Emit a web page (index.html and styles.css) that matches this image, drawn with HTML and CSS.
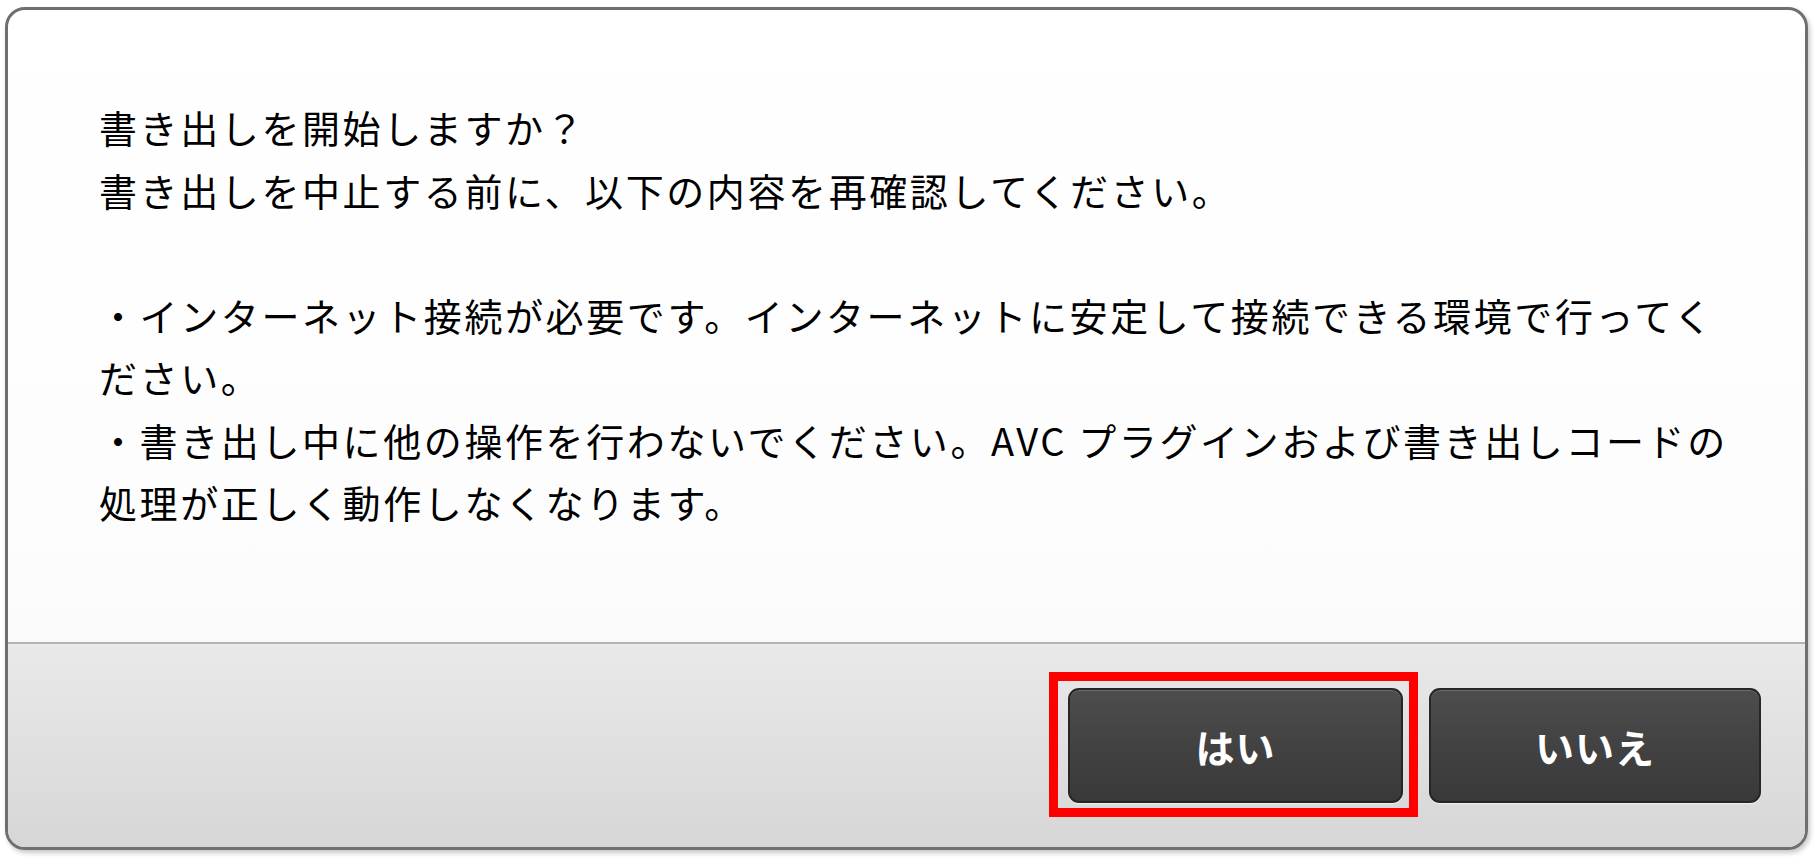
FILE: index.html
```html
<!DOCTYPE html>
<html lang="ja">
<head>
<meta charset="utf-8">
<title>書き出し確認</title>
<link rel="stylesheet" href="styles.css">
</head>
<body>
<div class="dialog">
  <div class="content">
    <p class="msg">書き出しを開始しますか？<br>書き出しを中止する前に、以下の内容を再確認してください。<br>&nbsp;<br>・インターネット接続が必要です。インターネットに安定して接続できる環境で行ってく<br>ださい。<br>・書き出し中に他の操作を行わないでください。AVC プラグインおよび書き出しコードの<br>処理が正しく動作しなくなります。</p>
  </div>
  <div class="footer">
    <div class="btn-wrap">
      <button class="btn btn-yes">はい</button>
      <span class="highlight"></span>
    </div>
    <button class="btn btn-no">いいえ</button>
  </div>
</div>
</body>
</html>
```

FILE: styles.css
```css
html, body {
  margin: 0;
  padding: 0;
  background: #ffffff;
}
body {
  width: 1816px;
  height: 866px;
  overflow: hidden;
  font-family: "Noto Sans CJK JP", "Noto Sans", sans-serif;
}
.dialog {
  margin: 7px 0 0 5px;
  width: 1803px;
  height: 843px;
  box-sizing: border-box;
  border: 3px solid #6f6f6f;
  border-radius: 20px;
  display: flex;
  flex-direction: column;
  overflow: hidden;
  background: linear-gradient(#ffffff 0%, #fdfdfd 60%, #f6f6f6 100%);
  box-shadow: 2px 3px 5px rgba(0, 0, 0, 0.22);
}
.content {
  flex: 1;
  padding: 86px 0 0 91px;
}
.msg {
  margin: 0;
  font-size: 38px;
  font-weight: 400;
  letter-spacing: 2.6px;
  line-height: 62.5px;
  color: #000000;
  white-space: nowrap;
}
.footer {
  height: 205px;
  box-sizing: border-box;
  border-top: 2px solid #b4b4b4;
  background: linear-gradient(#e9e9e9 0%, #e0e0e0 50%, #d6d6d6 100%);
  display: flex;
  justify-content: flex-end;
  align-items: center;
  gap: 26px;
  padding: 0 44px 0 0;
}
.btn-wrap {
  position: relative;
  display: flex;
}
.btn {
  height: 115px;
  box-sizing: border-box;
  border: 2px solid #262626;
  border-radius: 11px;
  background: linear-gradient(#4d4d4d 0%, #424242 50%, #393939 100%);
  box-shadow: inset 0 1px 0 rgba(255, 255, 255, 0.18), 0 1px 1px rgba(255, 255, 255, 0.6);
  color: #ffffff;
  font-family: "Noto Sans CJK JP", "Noto Sans", sans-serif;
  font-size: 39px;
  font-weight: 700;
  letter-spacing: 1px;
  padding: 0;
  cursor: pointer;
}
.btn-yes {
  width: 335px;
}
.btn-no {
  width: 332px;
}
.highlight {
  position: absolute;
  top: -16px;
  left: -19px;
  right: -15px;
  bottom: -14px;
  border: 9px solid #ff0000;
  pointer-events: none;
}
```
